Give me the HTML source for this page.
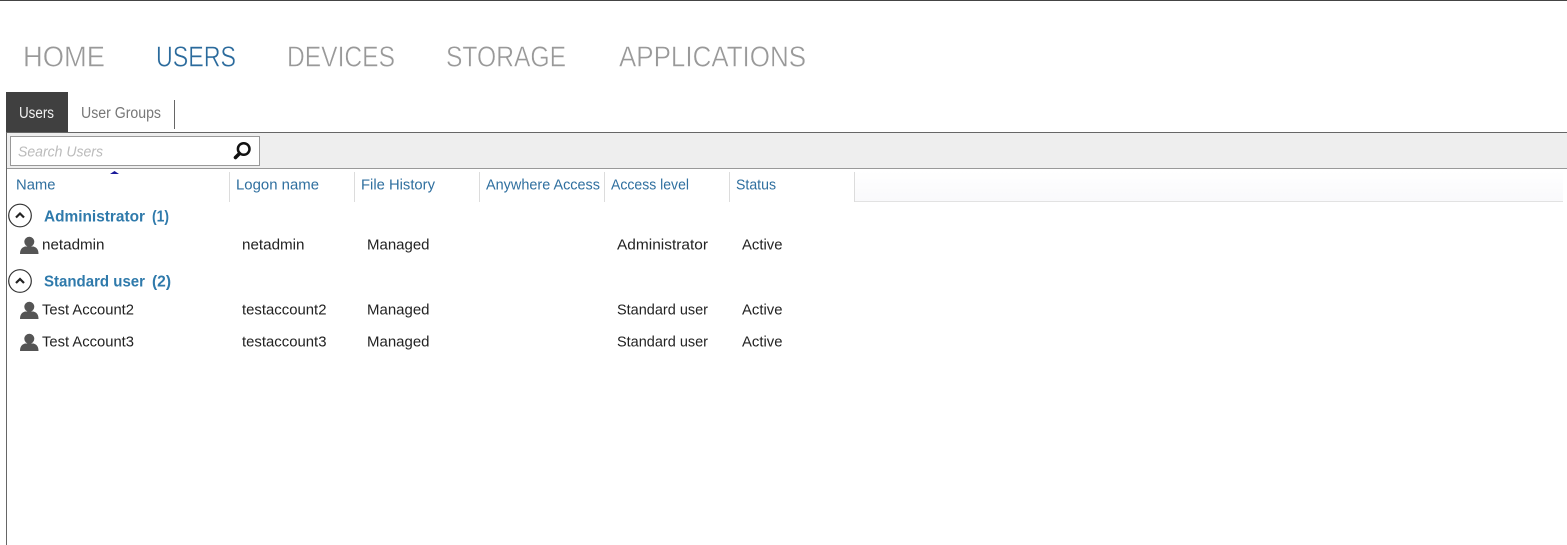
<!DOCTYPE html>
<html>
<head>
<meta charset="utf-8">
<style>
html,body{margin:0;padding:0;background:#fff;width:1567px;height:545px;overflow:hidden}
svg{display:block}
text{font-family:"Liberation Sans",sans-serif}
.nav{font-size:28.5px;fill:#999;stroke:#fff;stroke-width:.45px}
.h{font-size:14.5px;fill:#2f6f9f}
.c{font-size:14.5px;fill:#222}
.g{font-size:15.5px;font-weight:bold;fill:#2f7aab}
</style>
</head>
<body>
<svg width="1567" height="545" viewBox="0 0 1567 545" xmlns="http://www.w3.org/2000/svg">
<defs>
<linearGradient id="hg" x1="0" y1="0" x2="0" y2="1"><stop offset="0" stop-color="#fff"/><stop offset="1" stop-color="#f9f9fb"/></linearGradient>
<g id="user" fill="#555">
<circle cx="9.300" cy="5.800" r="5"/>
<path d="M0 18 C0 14 1.500 11.500 5 10.500 L13.500 10.500 C17 11.500 18.500 14 18.500 18 Z"/>
</g>
<g id="col">
<circle cx="0" cy="0" r="11.300" fill="#fff" stroke="#333" stroke-width="1.200"/>
<path d="M-4 2 L0 -2 L4 2" fill="none" stroke="#222" stroke-width="2.200"/>
</g>
</defs>

<rect x="0" y="0" width="1567" height="1" fill="#444"/>

<text class="nav" x="23" y="66.700" textLength="82" lengthAdjust="spacingAndGlyphs">HOME</text>
<text class="nav" x="156" y="66.700" textLength="80" lengthAdjust="spacingAndGlyphs" style="fill:#2a6a9c">USERS</text>
<text class="nav" x="287" y="66.700" textLength="108" lengthAdjust="spacingAndGlyphs">DEVICES</text>
<text class="nav" x="446" y="66.700" textLength="120" lengthAdjust="spacingAndGlyphs">STORAGE</text>
<text class="nav" x="619" y="66.700" textLength="187" lengthAdjust="spacingAndGlyphs">APPLICATIONS</text>

<rect x="6" y="92" width="1" height="453" fill="#666"/>
<rect x="6" y="92" width="62" height="40" fill="#404040"/>
<text x="19" y="118" font-size="15.500" fill="#f2f2f2" textLength="35" lengthAdjust="spacingAndGlyphs">Users</text>
<text x="81" y="118" font-size="15.500" fill="#777" textLength="80" lengthAdjust="spacingAndGlyphs">User Groups</text>
<rect x="174" y="100" width="1" height="29" fill="#666"/>

<rect x="6" y="132" width="1561" height="1" fill="#666"/>
<rect x="7" y="133" width="1560" height="35" fill="#eee"/>
<rect x="7" y="168" width="1560" height="1" fill="#999"/>

<rect x="10.500" y="136.500" width="249" height="29" fill="#fff" stroke="#999"/>
<text x="18" y="156.500" font-size="15" font-style="italic" fill="#bbb" textLength="85" lengthAdjust="spacingAndGlyphs">Search Users</text>
<circle cx="243.700" cy="149" r="5.800" fill="none" stroke="#111" stroke-width="2.500"/>
<path d="M239.500 153.500 L235.500 157.500" stroke="#111" stroke-width="3.600" stroke-linecap="round"/>

<path d="M110 174 L114.500 171 L119 174 Z" fill="#1a1a9a"/>

<rect x="854" y="171" width="709" height="30" fill="url(#hg)"/>
<rect x="854" y="201" width="709" height="1" fill="#e2e2e2"/>
<g fill="#dcdcdc">
<rect x="229" y="172" width="1" height="30"/>
<rect x="354" y="172" width="1" height="30"/>
<rect x="479" y="172" width="1" height="30"/>
<rect x="604" y="172" width="1" height="30"/>
<rect x="729" y="172" width="1" height="30"/>
<rect x="854" y="172" width="1" height="30"/>
</g>

<text class="h" x="16" y="189.500" textLength="39.500" lengthAdjust="spacingAndGlyphs">Name</text>
<text class="h" x="236" y="189.500" textLength="83" lengthAdjust="spacingAndGlyphs">Logon name</text>
<text class="h" x="361" y="189.500" textLength="74" lengthAdjust="spacingAndGlyphs">File History</text>
<text class="h" x="486" y="189.500" textLength="114" lengthAdjust="spacingAndGlyphs">Anywhere Access</text>
<text class="h" x="611" y="189.500" textLength="78" lengthAdjust="spacingAndGlyphs">Access level</text>
<text class="h" x="736" y="189.500" textLength="40" lengthAdjust="spacingAndGlyphs">Status</text>

<use href="#col" x="20" y="215.500"/>
<text class="g" x="44" y="221.500" textLength="101" lengthAdjust="spacingAndGlyphs">Administrator</text>
<text class="g" x="152" y="221.500" textLength="17" lengthAdjust="spacingAndGlyphs">(1)</text>
<use href="#user" x="20" y="236"/>
<text class="c" x="42" y="249.500" textLength="62.500" lengthAdjust="spacingAndGlyphs">netadmin</text>
<text class="c" x="242" y="249.500" textLength="62.500" lengthAdjust="spacingAndGlyphs">netadmin</text>
<text class="c" x="367" y="249.500" textLength="62.500" lengthAdjust="spacingAndGlyphs">Managed</text>
<text class="c" x="617" y="249.500" textLength="91" lengthAdjust="spacingAndGlyphs">Administrator</text>
<text class="c" x="742" y="249.500" textLength="40.500" lengthAdjust="spacingAndGlyphs">Active</text>

<use href="#col" x="20" y="281"/>
<text class="g" x="44" y="286.500" textLength="101" lengthAdjust="spacingAndGlyphs">Standard user</text>
<text class="g" x="152" y="286.500" textLength="19" lengthAdjust="spacingAndGlyphs">(2)</text>
<use href="#user" x="20" y="301"/>
<text class="c" x="42" y="314.500" textLength="92" lengthAdjust="spacingAndGlyphs">Test Account2</text>
<text class="c" x="242" y="314.500" textLength="84.500" lengthAdjust="spacingAndGlyphs">testaccount2</text>
<text class="c" x="367" y="314.500" textLength="62.500" lengthAdjust="spacingAndGlyphs">Managed</text>
<text class="c" x="617" y="314.500" textLength="91" lengthAdjust="spacingAndGlyphs">Standard user</text>
<text class="c" x="742" y="314.500" textLength="40.500" lengthAdjust="spacingAndGlyphs">Active</text>

<use href="#user" x="20" y="333"/>
<text class="c" x="42" y="346.500" textLength="92" lengthAdjust="spacingAndGlyphs">Test Account3</text>
<text class="c" x="242" y="346.500" textLength="84.500" lengthAdjust="spacingAndGlyphs">testaccount3</text>
<text class="c" x="367" y="346.500" textLength="62.500" lengthAdjust="spacingAndGlyphs">Managed</text>
<text class="c" x="617" y="346.500" textLength="91" lengthAdjust="spacingAndGlyphs">Standard user</text>
<text class="c" x="742" y="346.500" textLength="40.500" lengthAdjust="spacingAndGlyphs">Active</text>
</svg>
</body>
</html>
